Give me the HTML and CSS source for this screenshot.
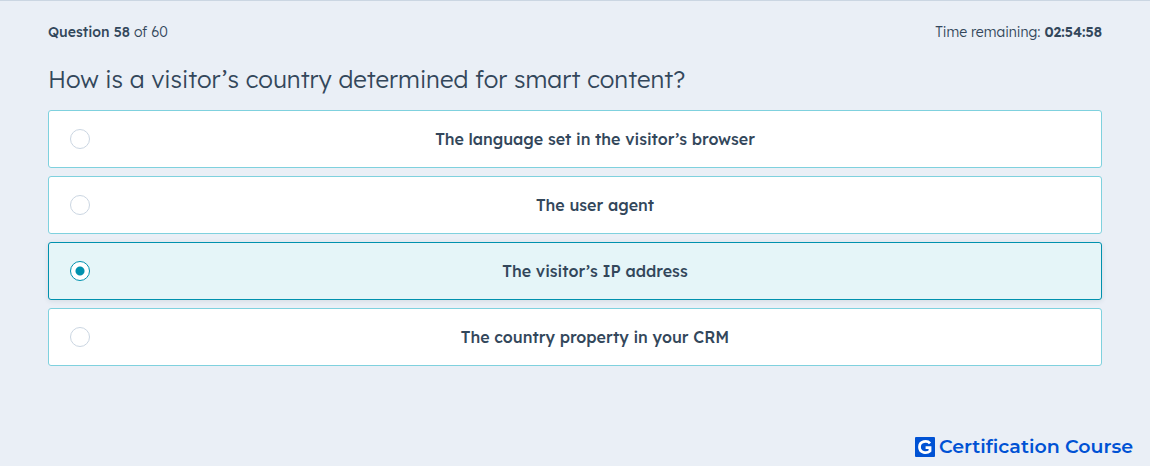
FILE: index.html
```html
<!DOCTYPE html>
<html lang="en">
<head>
  <meta charset="UTF-8">
  <meta name="viewport" content="width=device-width, initial-scale=1">
  <title>Certification Course - Question 58</title>
  <link rel="stylesheet" href="styles.css">
</head>
<body>

<main class="exam">
  <div class="exam-status">
    <div><strong>Question 58</strong> of 60</div>
    <div>Time remaining: <strong class="timer">02:54:58</strong></div>
  </div>

  <form>
    <fieldset class="question">
      <legend>How is a visitor’s country determined for smart content?</legend>

      <label class="option">
        <input type="radio" name="answer" value="language">
        <span>The language set in the visitor’s browser</span>
      </label>
      <label class="option">
        <input type="radio" name="answer" value="agent">
        <span>The user agent</span>
      </label>
      <label class="option">
        <input type="radio" name="answer" value="ip" checked>
        <span>The visitor’s IP address</span>
      </label>
      <label class="option">
        <input type="radio" name="answer" value="crm">
        <span>The country property in your CRM</span>
      </label>
    </fieldset>
  </form>
</main>

<footer class="brand">
  <svg class="brand-logo" viewBox="0 0 20 20" aria-hidden="true">
    <rect width="20" height="20" rx="1" fill="#0052d4"/>
    <path d="M15 6.4C12.2 3.1 4.5 4 4.5 10C4.5 16.2 12 16.8 15 14V10.6H10.6" fill="none" stroke="#fff" stroke-width="2.8"/>
  </svg>
  <span>Certification Course</span>
</footer>

</body>
</html>
```

FILE: styles.css
```css
* {
  box-sizing: border-box;
}

body {
  display: flex;
  flex-direction: column;
  min-height: 100vh;
  margin: 0;
  border-top: 1px solid #cbd6e2;
  background: #eaeff6;
  color: #33475b;
  font-family: "Lexend Deca", Lexend, Inter, sans-serif;
  font-size: 14px;
  line-height: 24px;
}

.exam {
  flex: 1;
  padding: 19px 48px 24px;
}

.exam-status {
  display: flex;
  justify-content: space-between;
  font-weight: 300;
}

.exam-status strong {
  font-weight: 500;
}

.exam-status .timer {
  font-weight: 600;
}

.question {
  display: flex;
  flex-direction: column;
  gap: 8px;
  margin: 0;
  padding: 0;
  border: 0;
}

.question legend {
  padding: 19px 0 15px;
  font-size: 24px;
  font-weight: 300;
  line-height: 32px;
}

.option {
  display: flex;
  align-items: center;
  min-height: 58px;
  padding: 16px 21px;
  border: 1px solid #7fd1de;
  border-radius: 3px;
  background: #fff;
  font-size: 16px;
  font-weight: 500;
  cursor: pointer;
}

.option span {
  flex: 1;
  padding-left: 20px;
  text-align: center;
}

.option input {
  appearance: none;
  flex: none;
  width: 20px;
  height: 20px;
  margin: 0;
  border: 1px solid #cbd6e2;
  border-radius: 50%;
  background: #fff;
}

.option:has(input:checked) {
  border-color: #0091ae;
  background: #e5f5f8;
  box-shadow: 0 1px 5px rgba(45, 62, 80, 0.12);
}

.option input:checked {
  border-color: #0091ae;
  background: radial-gradient(circle, #0091ae 4px, #fff 5px);
}

.brand {
  display: flex;
  align-items: center;
  justify-content: flex-end;
  gap: 4px;
  padding: 0 17px 7px;
  color: #0052d4;
  font-family: Montserrat, Inter, sans-serif;
  font-size: 19px;
  font-weight: 600;
}

.brand-logo {
  width: 20px;
  height: 20px;
}
```
